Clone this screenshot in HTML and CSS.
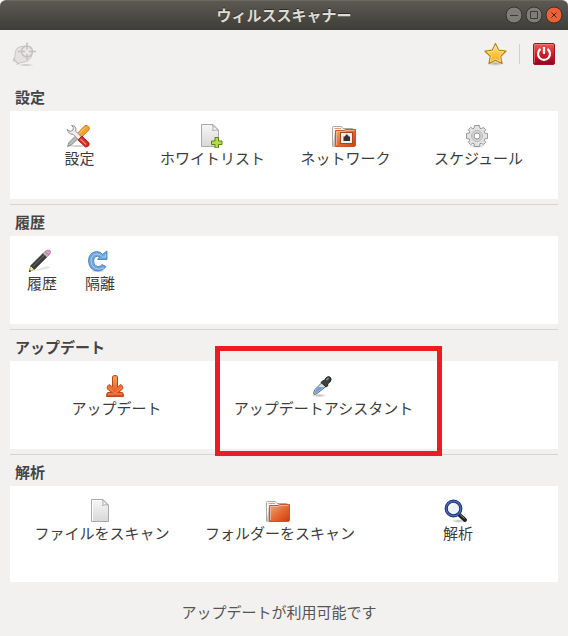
FILE: index.html
```html
<!DOCTYPE html>
<html lang="ja">
<head>
<meta charset="utf-8">
<title>ウィルススキャナー</title>
<link rel="stylesheet" href="styles.css">
</head>
<body>
<svg class="defs" width="0" height="0" aria-hidden="true">
  <defs>
    <linearGradient id="paper" x1="0" y1="0" x2="0" y2="1"><stop offset="0" stop-color="#f6f6f6"/><stop offset="1" stop-color="#d8d8d8"/></linearGradient>
    <linearGradient id="orange" x1="0" y1="0" x2="1" y2="1"><stop offset="0" stop-color="#f3ad74"/><stop offset=".5" stop-color="#e66a35"/><stop offset="1" stop-color="#cf3a0c"/></linearGradient>
    <linearGradient id="gold" x1="0" y1="0" x2="0" y2="1"><stop offset="0" stop-color="#ffe58a"/><stop offset="1" stop-color="#f9a01c"/></linearGradient>
    <linearGradient id="red" x1="0" y1="0" x2="0" y2="1"><stop offset="0" stop-color="#e4605c"/><stop offset=".5" stop-color="#cf1f27"/><stop offset="1" stop-color="#8c0624"/></linearGradient>
    <linearGradient id="arrow" x1="0" y1="0" x2="0" y2="1"><stop offset="0" stop-color="#f4a468"/><stop offset="1" stop-color="#e8480f"/></linearGradient>
    <radialGradient id="shade"><stop offset="0" stop-color="#000" stop-opacity=".28"/><stop offset="1" stop-color="#000" stop-opacity="0"/></radialGradient>
    <symbol id="page" viewBox="0 0 24 24">
      <path d="M3.500.500H15l5.500 5.500V22.500H3.500Z" fill="url(#paper)" stroke="#aaa"/>
      <path d="M4.500 21.500V1.500H14" fill="none" stroke="#fff"/>
      <path d="M14.500 1C15.500 3 15 5 14.500 6.500C17 5.500 19 5.500 20.500 6.500Z" fill="#fff" stroke="#aaa"/>
    </symbol>
    <symbol id="folder" viewBox="0 0 24 24">
      <path d="M.500 22.500V3.500Q.500 2.500 1.500 2.500H9.500L11 4.500H20.500Q21.500 4.500 21.500 5.500V8" fill="#f7f7f7" stroke="#a9a9a9"/>
      <path d="M2.500 4.500H9" stroke="#e69a77"/>
      <path d="M1 22L3 7V23H1Z" fill="#bbb"/>
      <path d="M3.500 6.500H12L13.500 5.500H23.500V21Q23.500 22.500 22 22.500H3.500Z" fill="url(#orange)" stroke="#c9572a"/>
      <path d="M4.500 21V7.500H12.500L14 6.500H22.500" fill="none" stroke="#f8c3a0" opacity=".7"/>
    </symbol>
  </defs>
</svg>

<header class="titlebar">
  <h1 class="title">ウィルススキャナー</h1>
  <div class="window-controls">
    <button class="control" aria-label="最小化"><svg viewBox="0 0 18 18"><circle cx="9" cy="9" r="8"/><path d="M5 9.500h8"/></svg></button>
    <button class="control" aria-label="最大化"><svg viewBox="0 0 18 18"><circle cx="9" cy="9" r="8"/><path d="M5.500 5.500h7v7h-7z"/></svg></button>
    <button class="control close" aria-label="閉じる"><svg viewBox="0 0 18 18"><circle cx="9" cy="9" r="8"/><path d="M6.500 6.500l5 5m0-5l-5 5"/></svg></button>
  </div>
</header>

<nav class="toolbar">
  <svg class="icon brand" viewBox="0 0 24 24">
    <ellipse cx="14" cy="23" rx="9" ry="1" fill="url(#shade)"/>
    <path d="M2.500 17.500L3.500 9Q5 5 9 4.500L16 4Q21 7 20 12Q19 19 12 20L5.500 21.500Z" fill="#e4e1e1" stroke="#ccc7c7"/>
    <path d="M1 17l6 5M2 16v4M5 23l1-2" stroke="#c4bfbf" fill="none"/>
    <circle cx="15" cy="9.500" r="5.500" fill="#e9e6e6" stroke="#c8c0c0" stroke-width="1.500"/>
    <path d="M15 .500v7M15 12v6M6 9.500h7M17 9.500h7" stroke="#c8bebe" stroke-width="1.500"/>
  </svg>
  <div class="toolbar-end">
    <button class="tool" aria-label="お気に入り"><svg class="icon" viewBox="0 0 24 24">
      <ellipse cx="12.500" cy="21.500" rx="9" ry="2.500" fill="url(#shade)"/>
      <path d="M12.500 1.500L15.700 8.200L23 9.200L17.700 14.300L19 21.500L12.500 18.200L6 21.500L7.300 14.300L2 9.200L9.300 8.200Z" fill="url(#gold)" stroke="#b98413" stroke-width="1.200" stroke-linejoin="round"/>
      <path d="M12.500 3.800L15 9.200L20.500 10L16.500 13.700L17.500 19.500L12.500 17L7.500 19.500L8.500 13.700L4.500 10L10 9.200Z" fill="none" stroke="#ffe9a8" stroke-width=".8"/>
    </svg></button>
    <span class="separator"></span>
    <button class="tool" aria-label="終了"><svg class="icon" viewBox="0 0 24 24">
      <rect x="1.500" y="1.500" width="21" height="21" rx="1.500" fill="url(#red)" stroke="#a31226"/>
      <path d="M2.500 21V2.500H21.500" fill="none" stroke="#f08a85" opacity=".6"/>
      <path d="M8.500 7A6 6 0 1 0 15.500 7M12 5V12" fill="none" stroke="#fff" stroke-width="2.200"/>
    </svg></button>
  </div>
</nav>

<main>
  <section class="section">
    <h2>設定</h2>
    <div class="panel settings">
      <button class="item"><svg class="icon" viewBox="0 0 24 24">
        <ellipse cx="12" cy="22" rx="11" ry="1.500" fill="url(#shade)"/>
        <path d="M1.500 22.500L3 18.500L12 9.500L14.500 12L5.500 21Z" fill="#bbb" stroke="#777" stroke-width=".8"/>
        <path d="M10 11L18.500 2Q20 .500 21.500 1.800L23 3.300Q24 4.500 22.800 6L14 15Z" fill="#f6a12d" stroke="#c87514" stroke-width=".9"/>
        <path d="M12 10.500L20 3" stroke="#ffd17d"/>
        <path d="M5.500 1.300Q9.500 1.300 10 5L9.600 7L15.500 13L12.500 16L7 10.200Q2.500 10.500 1.200 5.500L4 7.300L6.800 6.500L7.300 3.500Z" fill="#ededed" stroke="#888" stroke-width=".9" stroke-linejoin="round"/>
        <path d="M11.800 16L16 12.200L23 18.800Q24 23 19.500 23Z" fill="#d92b20" stroke="#a51b14" stroke-width=".9"/>
        <path d="M14.500 15L20 20.500" stroke="#f4867c" stroke-width="1.200"/>
      </svg><span>設定</span></button>
      <button class="item"><svg class="icon" viewBox="0 0 24 24">
        <path d="M2.500.500H14L19.500 6V22.500H2.500Z" fill="url(#paper)" stroke="#aaa"/>
        <path d="M13.500 1Q15 4 13.500 6.500Q17 5.500 19.500 6.500Z" fill="#fff" stroke="#aaa"/>
        <path d="M16 13.500h3.500V17H23v3.500h-3.500V24H16v-3.500h-3.500V17H16Z" fill="#b8d94a" stroke="#55820e"/>
      </svg><span>ホワイトリスト</span></button>
      <button class="item"><svg class="icon" viewBox="0 0 24 24"><use href="#folder"/>
        <rect x="8.500" y="8.500" width="12" height="11" fill="#eee" stroke="#a64522"/>
        <path d="M11.500 17V12.500H13V11.500H14V10.500H15.500V11.500H16.500V12.500H18V17Z" fill="#303030"/>
      </svg><span>ネットワーク</span></button>
      <button class="item"><svg class="icon" viewBox="0 0 24 24">
        <ellipse cx="12" cy="22" rx="9" ry="2" fill="url(#shade)"/>
        <path d="M9.500 1.500H14.500L15 4.300L16.200 4.800L18.300 3.300L20.700 5.700L19.200 7.800L19.700 9L22.500 9.500V14.500L19.700 15L19.200 16.200L20.700 18.300L18.300 20.700L16.200 19.200L15 19.700L14.500 22.500H9.500L9 19.700L7.800 19.200L5.700 20.700L3.300 18.300L4.800 16.200L4.300 15L1.500 14.500V9.500L4.300 9L4.800 7.800L3.300 5.700L5.700 3.300L7.800 4.800L9 4.300Z" fill="#e2e2e2" stroke="#999" stroke-linejoin="round"/>
        <circle cx="12" cy="12" r="5.500" fill="#d3d3d3" stroke="#bbb"/>
        <circle cx="12" cy="12" r="3" fill="#fff" stroke="#999"/>
      </svg><span>スケジュール</span></button>
    </div>
  </section>

  <section class="section">
    <h2>履歴</h2>
    <div class="panel history">
      <button class="item"><svg class="icon" viewBox="0 0 24 24">
        <path d="M4 22.500L18 17.500Q24 17 20 19.500Z" fill="#000" opacity=".12"/>
        <path d="M1 22.800L2.700 16.800L6.500 20.300Z" fill="#f3e59a" stroke="#96843c" stroke-width=".7"/>
        <path d="M1 23L1.600 20.800L3.200 22.200Z" fill="#222"/>
        <path d="M2.700 16.800L15 4.500L18.800 8L6.500 20.300Z" fill="#3c3c3c" stroke="#222" stroke-width=".7"/>
        <path d="M5 17.500L16.500 6" stroke="#777"/>
        <path d="M15 4.500L17 2.500L20.900 6.100L18.800 8Z" fill="#bbb" stroke="#777" stroke-width=".6"/>
        <path d="M17 2.500Q19.500 0 22 1.500Q23.800 3.800 20.900 6.100Z" fill="#e69aca" stroke="#a86291" stroke-width=".7"/>
      </svg><span>履歴</span></button>
      <button class="item"><svg class="icon" viewBox="0 0 24 24">
        <ellipse cx="12" cy="22" rx="8" ry="1.500" fill="url(#shade)"/>
        <path d="M16.500 5.300Q14.500 2.500 10.500 2.500Q2.500 3.500 2.500 12Q3 21.500 12 22Q18 21.500 20 17.500L16 15.500Q14.500 18 11.500 17.500Q7.500 16.500 7.500 12Q8 7.500 11.500 7.300L13.500 8.300L11.500 10.500H21V2Z" fill="#6fa5dc" stroke="#3c78b5" stroke-width=".8" stroke-linejoin="round"/>
        <path d="M18 19Q13 21.500 8.500 19Q4.500 16 5 11Q6 5 11 5Q14.500 5 16.500 8H19.500V5" fill="none" stroke="#a9cef0"/>
      </svg><span>隔離</span></button>
    </div>
  </section>

  <section class="section">
    <h2>アップデート</h2>
    <div class="panel update">
      <button class="item"><svg class="icon" viewBox="0 0 24 24">
        <path d="M9.500 3Q9.500 1.500 12 1.500Q14.500 1.500 14.500 3V13L18 10.500Q20 12 20 14.500L15.500 18.500H19Q20.500 18.500 20.500 22.500H3.500Q3.500 18.500 5 18.500H8.500L4 14.500Q4 12 6 10.500L9.500 13Z" fill="url(#arrow)" stroke="#bd4718" stroke-linejoin="round"/>
        <path d="M5 13.500L12 19L19 13.500M5 20H19" fill="none" stroke="#f79b70" stroke-width=".8"/>
      </svg><span>アップデート</span></button>
      <button class="item highlighted"><svg class="icon" viewBox="0 0 24 24">
        <ellipse cx="9" cy="21.500" rx="8" ry="2" fill="url(#shade)"/>
        <path d="M4 20.500Q3 18 5 15.500L12.500 8L16.500 12L9 18Q7 20 4 20.500Z" fill="#d9e4ea" stroke="#55646c"/>
        <path d="M5 19Q4.500 17.500 6 15.500L8.500 13H14L8.500 17.500Q7 19 5 19Z" fill="#6fa2dc"/>
        <path d="M11 8.500L13 6.500L14 7L16 4Q18.500 1.500 20.500 3.500Q22 5.500 20 8L17.500 10L18 11.500L16 13Z" fill="#3d4140" stroke="#242826"/>
        <path d="M16.500 6L18.500 4" stroke="#8e9896" stroke-width="1.500"/>
      </svg><span>アップデートアシスタント</span></button>
    </div>
  </section>

  <section class="section">
    <h2>解析</h2>
    <div class="panel analysis">
      <button class="item"><svg class="icon"><use href="#page"/></svg><span>ファイルをスキャン</span></button>
      <button class="item"><svg class="icon"><use href="#folder"/></svg><span>フォルダーをスキャン</span></button>
      <button class="item"><svg class="icon" viewBox="0 0 24 24">
        <ellipse cx="15" cy="22" rx="8" ry="2" fill="url(#shade)"/>
        <path d="M14.500 15L21 21" stroke="#222" stroke-width="4" stroke-linecap="round"/>
        <path d="M16 15.500L20.500 19.500" stroke="#8a8a8a"/>
        <circle cx="9.500" cy="9.500" r="7.300" fill="#edf2f8" stroke="#172c69" stroke-width="3.200"/>
        <circle cx="9.500" cy="9.500" r="7.300" fill="none" stroke="#476bbb" stroke-width="1.400"/>
        <path d="M5 9Q6 5 10 5" fill="none" stroke="#fff" stroke-width="2"/>
      </svg><span>解析</span></button>
    </div>
  </section>
</main>

<footer class="status">アップデートが利用可能です</footer>
</body>
</html>
```
FILE: styles.css
```css
* {
  box-sizing: border-box;
}

body {
  margin: 0;
  min-height: 100vh;
  background: #f2f1f0;
  color: #3c3c3c;
  font: 15px/20px "Noto Sans CJK JP", sans-serif;
}

h1,
h2 {
  margin: 0;
  font-size: 15px;
  line-height: 22px;
  font-weight: 700;
}

button {
  border: 0;
  padding: 0;
  background: none;
  color: inherit;
  font: inherit;
}

svg {
  display: block;
}

.defs {
  position: absolute;
}

.icon {
  width: 24px;
  height: 24px;
}

.titlebar {
  display: grid;
  grid-template-columns: 1fr auto 1fr;
  align-items: center;
  height: 30px;
  padding: 0 5px 2px;
  border-top: 1px solid #6b6860;
  border-radius: 6px 6px 0 0;
  background: linear-gradient(#5c5952, #3e3d38);
  box-shadow: 0 -6px 0 6px #fff;
  clip-path: inset(0);
}

.title {
  grid-column: 2;
  color: #dfdbd2;
  text-shadow: 0 -1px 0 #2c2b27;
}

.window-controls {
  display: flex;
  justify-content: flex-end;
  gap: 2px;
}

.control {
  width: 18px;
  height: 18px;
}

.control circle {
  fill: #7f7d76;
  stroke: #34332f;
}

.control path {
  fill: none;
  stroke: #3c3b37;
  stroke-width: 1;
}

.close circle {
  fill: #ee6036;
}

.close path {
  stroke: #54200f;
}

.toolbar {
  display: flex;
  justify-content: space-between;
  padding: 12px 12px 14px;
}

.toolbar-end {
  display: flex;
  align-items: center;
  gap: 12px;
}

.separator {
  width: 1px;
  height: 20px;
  background: #d3d1ce;
}

main {
  padding: 0 10px;
}

.section {
  padding: 6px 0 5px;
  border-bottom: 1px solid #d7d5d2;
}

.section:last-child {
  border-bottom: 0;
}

.section h2 {
  margin-bottom: 3px;
  padding-left: 5px;
  color: #454545;
}

.panel {
  display: grid;
  min-height: 88px;
  padding: 0 3px;
  background: #fff;
}

.settings {
  grid-template-columns: repeat(4, 133px);
}

.history {
  grid-template-columns: repeat(2, 58px);
}

.update {
  grid-template-columns: repeat(2, 207px);
}

.analysis {
  grid-template-columns: repeat(3, 178px);
  min-height: 96px;
}

.item {
  position: relative;
  display: flex;
  flex-direction: column;
  align-items: center;
  padding-top: 13px;
  white-space: nowrap;
}

.item .icon {
  margin-right: 4px;
}

.highlighted::after {
  content: "";
  position: absolute;
  inset: -15px -15px -7px -5px;
  border: 5px solid #ed1c24;
}

.status {
  padding: 15px 10px 13px 0;
  color: #555;
  text-align: center;
}
```
